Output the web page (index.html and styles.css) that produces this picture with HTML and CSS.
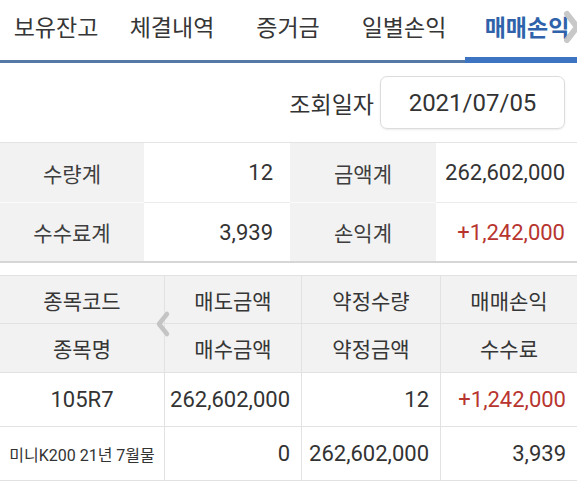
FILE: index.html
```html
<!DOCTYPE html>
<html lang="ko">
<head>
<meta charset="utf-8">
<link rel="stylesheet" href="styles.css">
</head>
<body>
<div class="page">
  <nav class="tabs">
    <div class="tab">보유잔고</div>
    <div class="tab">체결내역</div>
    <div class="tab">증거금</div>
    <div class="tab">일별손익</div>
    <div class="tab active">매매손익</div>
    <svg class="tab-more" width="18" height="34" viewBox="0 0 18 34"><polyline points="4,4 14,17 4,30" fill="none" stroke="#c2c2c2" stroke-width="6" stroke-linecap="round" stroke-linejoin="round" opacity="0.9"/></svg>
  </nav>

  <div class="query">
    <span class="query-label">조회일자</span>
    <div class="date-box">2021/07/05</div>
  </div>

  <div class="summary">
    <div class="s-label">수량계</div>
    <div class="s-value v2">12</div>
    <div class="s-label">금액계</div>
    <div class="s-value v4">262,602,000</div>
    <div class="s-label">수수료계</div>
    <div class="s-value v2">3,939</div>
    <div class="s-label">손익계</div>
    <div class="s-value v4 plus">+1,242,000</div>
  </div>

  <div class="list">
    <div class="grid head">
      <div class="h">종목코드</div>
      <div class="h">매도금액</div>
      <div class="h">약정수량</div>
      <div class="h">매매손익</div>
      <div class="h">종목명</div>
      <div class="h">매수금액</div>
      <div class="h">약정금액</div>
      <div class="h">수수료</div>
    </div>
    <div class="grid body">
      <div class="d center">105R7</div>
      <div class="d num">262,602,000</div>
      <div class="d num">12</div>
      <div class="d num plus">+1,242,000</div>
      <div class="d center small">미니K200 21년 7월물</div>
      <div class="d num">0</div>
      <div class="d num">262,602,000</div>
      <div class="d num">3,939</div>
    </div>
    <svg class="list-prev" width="18" height="28" viewBox="0 0 18 28"><polyline points="13,4 5,14 13,24" fill="none" stroke="#c4c4c4" stroke-width="4.5" stroke-linecap="round" stroke-linejoin="round"/></svg>
  </div>
</div>
</body>
</html>
```

FILE: styles.css
```css
* { box-sizing: border-box; }
html, body { margin: 0; padding: 0; background: #fff; }
body {
  font-family: Roboto, "Noto Sans CJK KR", sans-serif;
  color: #333;
  width: 577px;
  overflow: hidden;
}
.page { width: 577px; }

.tabs {
  position: relative;
  display: flex;
  height: 63px;
  border-bottom: 3px solid #5479a4;
  margin-left: -2px;
}
.tab {
  position: relative;
  flex: 0 0 116px;
  text-align: center;
  font-size: 23px;
  line-height: 58px;
  color: #363636;
  white-space: nowrap;
}
.tab.active {
  color: #2f62aa;
  font-weight: 700;
  padding-left: 14px;
}
.tab.active::after {
  content: "";
  position: absolute;
  left: 3px;
  right: -4px;
  bottom: -3px;
  height: 6px;
  background: #3d74c2;
}
.tab-more {
  position: absolute;
  right: -4px;
  top: 10px;
}

.query {
  display: flex;
  justify-content: flex-end;
  align-items: center;
  padding: 13px 12px 13px 0;
}
.query-label {
  font-size: 23px;
  color: #333;
  margin-right: 6px;
}
.date-box {
  width: 185px;
  height: 53px;
  border: 1px solid #dcdcdc;
  border-radius: 7px;
  box-shadow: 0 1px 2px rgba(0,0,0,0.08);
  display: flex;
  align-items: center;
  justify-content: center;
  font-size: 24px;
  color: #333;
}

.summary {
  display: grid;
  grid-template-columns: 144px 146px 146px 141px;
  grid-template-rows: 60px 58px;
  border-top: 1px solid #e4e4e4;
  border-bottom: 2px solid #d6d6d6;
}
.summary > div {
  display: flex;
  align-items: center;
  border-bottom: 1px solid #ececec;
}
.summary > div:nth-last-child(-n+4) { border-bottom: none; }
.s-label {
  background: #f2f2f2;
  justify-content: center;
  font-size: 21px;
  color: #3e3e3e;
  border-bottom-color: #fafafa !important;
}
.s-value {
  justify-content: flex-end;
  font-size: 22px;
}
.v2 { padding-right: 17px; }
.v4 { padding-right: 12px; }
.plus { color: #b8352f; }

.list {
  position: relative;
  margin-top: 12px;
}
.grid {
  display: grid;
  grid-template-columns: 165px 137px 139px 136px;
}
.head {
  grid-template-rows: 48px 49px;
  background: #f2f2f2;
  border-top: 1px solid #e2e2e2;
}
.h {
  display: flex;
  align-items: center;
  justify-content: center;
  font-size: 21px;
  color: #363636;
  border-right: 1px solid #e2e2e2;
  border-bottom: 1px solid #e2e2e2;
}
.h:nth-child(4n), .d:nth-child(4n) { border-right: none; }
.body { grid-template-rows: 54px 54px; }
.d {
  display: flex;
  align-items: center;
  font-size: 22px;
  border-right: 1px solid #e2e2e2;
  border-bottom: 1px solid #e2e2e2;
}
.d.center { justify-content: center; }
.d.num { justify-content: flex-end; padding-right: 11px; }
.d.small { font-size: 16px; white-space: nowrap; }
.list-prev {
  position: absolute;
  left: 154px;
  top: 35px;
}
```
